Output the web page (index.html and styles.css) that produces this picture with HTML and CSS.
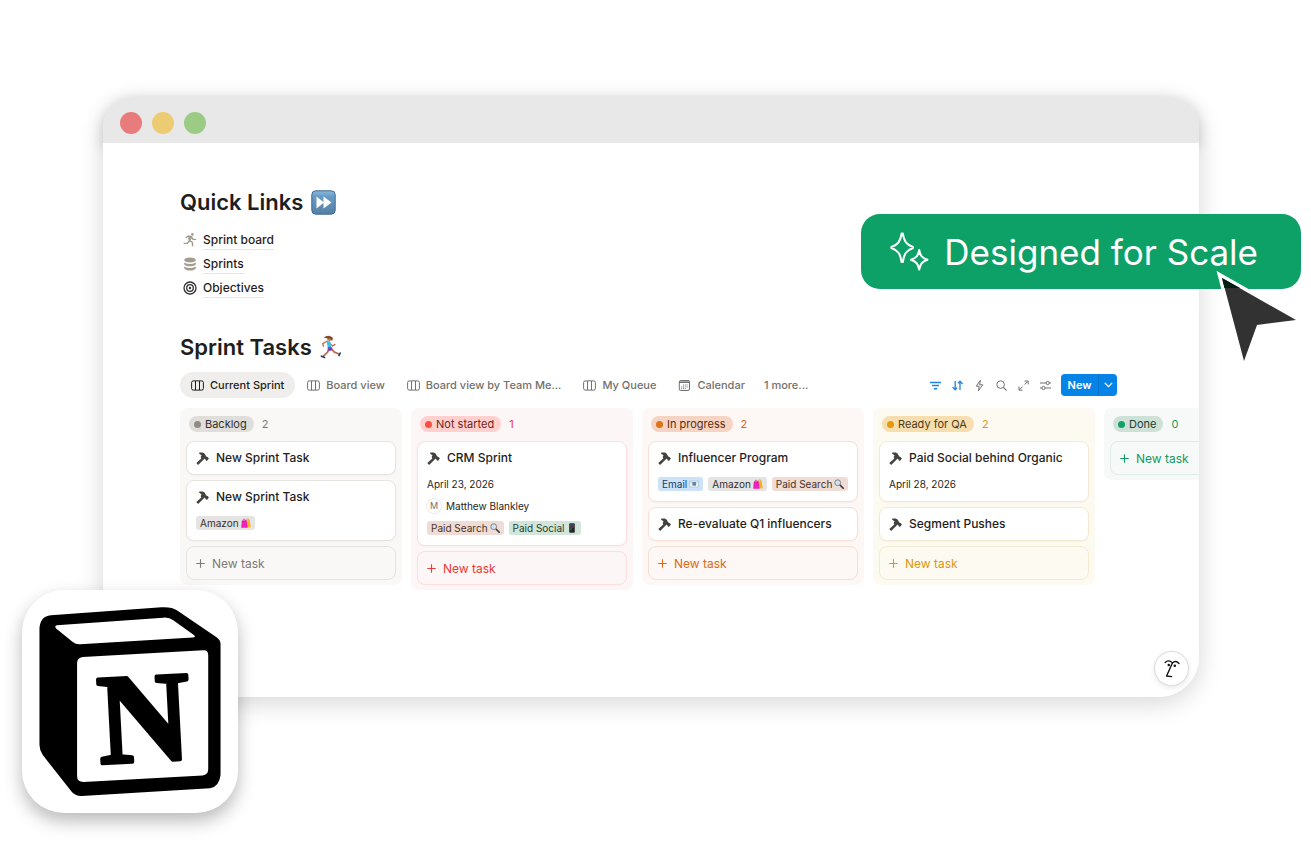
FILE: index.html
```html
<!DOCTYPE html>
<html lang="en">
    <head>
        <meta charset="UTF-8">
        <meta name="viewport" content="width=device-width, initial-scale=1">
        <title>Sprint Board</title>

        <link rel="stylesheet" href="styles.css">
    </head>

    <body>
        <!-- Shared icons -->
        <svg class="sprite" aria-hidden="true">
            <symbol id="hammer" viewBox="0 0 13 13">
                <path fill="#44423e" d="M0.3 11.1L5.3 6.4L4.6 4.9L5.6 3.6L3 1.4L3.4 0.6L6.8 0.6L8.8 1.8L9.8 3.8L10.9 5L11.6 4.9L12.9 6.6L10.9 9.1L9.4 7.9L9.4 7.1L8.3 6.8L7.4 7.8L2.1 12.9Z"/>
            </symbol>
            <symbol id="board" viewBox="0 0 13 11">
                <rect x="0.6" y="0.9" width="11.8" height="9.2" rx="1.6" fill="none" stroke="currentColor" stroke-width="1"/>
                <path d="M4.5 1V10M8.5 1V10" stroke="currentColor" stroke-width="1"/>
            </symbol>
            <symbol id="plus" viewBox="0 0 9 9">
                <path d="M4.5 0.3V8.7M0.3 4.5H8.7" stroke="currentColor" stroke-width="1.1"/>
            </symbol>
            <symbol id="bags" viewBox="0 0 10 10">
                <path d="M4.8 2.6L8.6 2L9.8 9.2L5.5 9.6Z" fill="#f6b51d"/>
                <path d="M5.5 2.8C5.5 0.2 7.8 0 8 2.4" fill="none" stroke="#d98a12" stroke-width="0.7"/>
                <path d="M0.8 2.7L5.6 2.3L6.6 9.7L0.2 9.7Z" fill="#f21fc0"/>
                <path d="M1.8 4C1.8 0.2 4.3 0.2 4.5 3.8" fill="none" stroke="#b9108f" stroke-width="0.7"/>
            </symbol>
            <symbol id="lens" viewBox="0 0 10 10">
                <path d="M6 6L9.2 9.2" stroke="#34343a" stroke-width="1.6" stroke-linecap="round"/>
                <circle cx="3.7" cy="3.7" r="2.9" fill="#cfe3f1" stroke="#77797d" stroke-width="0.9"/>
            </symbol>
            <symbol id="phone" viewBox="0 0 10 10">
                <rect x="2.2" y="0.3" width="5.6" height="9.4" rx="1" fill="#26262b"/>
                <path d="M3.3 2H4.5M5.4 2H6.6" stroke="#4db2f0" stroke-width="1"/>
                <path d="M3.3 4H4.5M5.4 4H6.6" stroke="#e0574f" stroke-width="1"/>
                <path d="M3.3 6H4.5" stroke="#58b96a" stroke-width="1"/>
            </symbol>
            <symbol id="mail" viewBox="0 0 10 10">
                <rect x="0.8" y="2" width="8.4" height="6" fill="#eef1f4" stroke="#a9b4be" stroke-width="0.5"/>
                <rect x="3.4" y="3" width="3.6" height="3.6" fill="#5c86ad"/>
                <path d="M1 2.4L4 5M9 2.4L6.4 5" stroke="#9aa7b3" stroke-width="0.5"/>
            </symbol>
        </svg>

        <div class="stage">
            <main class="window">
                <div class="title-bar">
                    <span class="dot dot-red"></span>
                    <span class="dot dot-yellow"></span>
                    <span class="dot dot-green"></span>
                </div>

                <div class="page">
                    <h2>
                        Quick Links
                        <svg class="heading-icon" viewBox="0 0 25 25" aria-hidden="true">
                            <defs>
                                <linearGradient id="tile" x1="0" y1="0" x2="0" y2="1">
                                    <stop offset="0" stop-color="#8ab8dc"/>
                                    <stop offset="0.25" stop-color="#679bc5"/>
                                    <stop offset="1" stop-color="#5580a3"/>
                                </linearGradient>
                            </defs>
                            <rect x="0.8" y="0.8" width="23.4" height="23.4" rx="4" fill="url(#tile)" stroke="#416a8d" stroke-width="1"/>
                            <path d="M5.5 6.5L13 12.5L5.5 18.5ZM12.5 6.5L20.5 12.5L12.5 18.5Z" fill="#fff"/>
                        </svg>
                    </h2>
                    <ul class="links">
                        <li>
                            <svg class="link-icon" viewBox="0 0 14 14" aria-hidden="true">
                                <g fill="none" stroke="#a39c90" stroke-width="1.4" stroke-linecap="round" stroke-linejoin="round">
                                    <path d="M3.2 4.6L5.2 3L8.6 3.6L6.6 7.6L9.4 9.4L9.6 12.8"/>
                                    <path d="M8.6 3.8L9.8 6.2L12.6 6.4"/>
                                    <path d="M6.2 8L4.6 10.2L1.2 10.4"/>
                                </g>
                                <path d="M5.4 3.4L8.4 3.8L7.2 7.8L5.4 7Z" fill="#a39c90"/>
                                <circle cx="9.4" cy="1.4" r="1.3" fill="#a39c90"/>
                            </svg>
                            <a href="#">Sprint board</a>
                        </li>
                        <li>
                            <svg class="link-icon" viewBox="0 0 14 14" aria-hidden="true">
                                <ellipse cx="7" cy="3" rx="5.8" ry="2.6" fill="#a39c90"/>
                                <path d="M1.2 5.4Q7 8.4 12.8 5.4V7.2Q11.6 9.2 7 9.3Q2.4 9.2 1.2 7.2ZM1.2 9.4Q7 12.4 12.8 9.4V11.2Q11.4 13.5 7 13.6Q2.6 13.5 1.2 11.2Z" fill="#a39c90"/>
                            </svg>
                            <a href="#">Sprints</a>
                        </li>
                        <li>
                            <svg class="link-icon" viewBox="0 0 14 14" aria-hidden="true">
                                <g fill="none" stroke="#32302c" stroke-width="1.3">
                                    <circle cx="7" cy="7" r="6"/>
                                    <circle cx="7" cy="7" r="3.3"/>
                                </g>
                                <circle cx="7" cy="7" r="1.2" fill="#32302c"/>
                            </svg>
                            <a href="#">Objectives</a>
                        </li>
                    </ul>

                    <h2>
                        Sprint Tasks
                        <svg class="heading-icon" viewBox="0 0 25 25" aria-hidden="true">
                            <g fill="none" stroke-linecap="round" stroke-linejoin="round">
                                <path d="M7.4 6L2.8 8.6L3.4 11" stroke="#b8714a" stroke-width="1.4"/>
                                <path d="M9 14L7.4 17.4L3.6 20.8" stroke="#b8714a" stroke-width="1.8"/>
                                <path d="M11.4 13.8L14.4 17.2L19 19" stroke="#b8714a" stroke-width="1.8"/>
                                <path d="M10 8.4L12.6 11L15 9.4" stroke="#b8714a" stroke-width="1.3"/>
                                <path d="M1.4 21.2L4.6 22.4" stroke="#27386f" stroke-width="1.6"/>
                                <path d="M19 20.6L20.2 18" stroke="#27386f" stroke-width="1.6"/>
                            </g>
                            <path d="M6.4 5.8L10.4 6.6L11 12L7.8 12.4Z" fill="#35c3e8"/>
                            <path d="M7.6 12.2L11.2 11.8L12.8 14.6L10.2 16L7.8 15.4Z" fill="#7c3fc4"/>
                            <circle cx="9.4" cy="3.8" r="2.2" fill="#c27c50"/>
                            <path d="M3.8 2.6Q8 -0.8 12.6 2.4Q13.2 4 12 6Q10.6 3.4 8.4 3.6Q6 3.4 3.8 2.6Z" fill="#854a2c"/>
                        </svg>
                    </h2>

                    <div class="toolbar">
                        <nav class="tabs">
                            <button class="tab tab-active" type="button"><svg class="tab-icon" aria-hidden="true"><use href="#board"/></svg>Current Sprint</button>
                            <button class="tab" type="button"><svg class="tab-icon" aria-hidden="true"><use href="#board"/></svg>Board view</button>
                            <button class="tab" type="button"><svg class="tab-icon" aria-hidden="true"><use href="#board"/></svg>Board view by Team Me...</button>
                            <button class="tab" type="button"><svg class="tab-icon" aria-hidden="true"><use href="#board"/></svg>My Queue</button>
                            <button class="tab" type="button">
                                <svg class="tab-icon" viewBox="0 0 13 11" aria-hidden="true">
                                    <rect x="1.3" y="0.5" width="10.2" height="10" rx="1.5" fill="none" stroke="currentColor"/>
                                    <path d="M1.3 2.2H11.5" stroke="currentColor" stroke-width="1.6"/>
                                    <path d="M5 5H10M3.2 6.9H10M3.2 8.7H8" stroke="currentColor" stroke-dasharray="1 0.8"/>
                                </svg>Calendar
                            </button>
                            <button class="tab tab-more" type="button">1 more...</button>
                        </nav>

                        <div class="tools">
                            <button class="tool tool-on" type="button" aria-label="Filter">
                                <svg viewBox="0 0 13 13"><path d="M1 3.4H12M3 6.6H10M4.8 9.8H8.2" fill="none" stroke="currentColor" stroke-width="1.5"/></svg>
                            </button>
                            <button class="tool tool-on" type="button" aria-label="Sort">
                                <svg viewBox="0 0 13 13"><path d="M4.2 2V10.6M1.6 8L4.2 10.8L6 8.8M9 11V2.2M7.2 4.2L9 2.2L11.6 5" fill="none" stroke="currentColor" stroke-width="1.3"/></svg>
                            </button>
                            <button class="tool" type="button" aria-label="Automations">
                                <svg viewBox="0 0 13 13"><path d="M7.4 1.4L3.2 7.2H6.2L5.4 11.8L9.8 5.8H6.6Z" fill="none" stroke="currentColor" stroke-width="1" stroke-linejoin="round"/></svg>
                            </button>
                            <button class="tool" type="button" aria-label="Search">
                                <svg viewBox="0 0 13 13"><path d="M8.4 8.4L11.6 11.6" stroke="currentColor" stroke-width="1.2"/><circle cx="5.6" cy="5.6" r="3.8" fill="none" stroke="currentColor" stroke-width="1"/></svg>
                            </button>
                            <button class="tool" type="button" aria-label="Expand">
                                <svg viewBox="0 0 13 13"><path d="M7.6 2H11.2V5.4M11 2.2L7.6 5.6M5.4 11.2H2V7.6M2.2 11L5.6 7.6" fill="none" stroke="currentColor" stroke-width="1"/></svg>
                            </button>
                            <button class="tool" type="button" aria-label="Settings">
                                <svg viewBox="0 0 13 13"><g fill="none" stroke="currentColor" stroke-width="1"><path d="M1 4H7M10.4 4H12M1 9H2.8M6.2 9H12"/><circle cx="8.7" cy="4" r="1.6"/><circle cx="4.5" cy="9" r="1.6"/></g></svg>
                            </button>
                            <div class="new-group">
                                <button class="new-button" type="button">New</button>
                                <button class="new-arrow" type="button" aria-label="New options">
                                    <svg viewBox="0 0 9 6"><path d="M0.8 0.9L4.5 4.6L8.2 0.9" fill="none" stroke="currentColor" stroke-width="1.3"/></svg>
                                </button>
                            </div>
                        </div>
                    </div>

                    <div class="board">
                        <section class="column gray">
                            <header><span class="status">Backlog</span><span class="count">2</span></header>
                            <article class="card">
                                <h3><svg class="hammer" aria-hidden="true"><use href="#hammer"/></svg>New Sprint Task</h3>
                            </article>
                            <article class="card">
                                <h3><svg class="hammer" aria-hidden="true"><use href="#hammer"/></svg>New Sprint Task</h3>
                                <div class="details">
                                    <div class="tags"><span class="tag tag-gray">Amazon <svg aria-hidden="true"><use href="#bags"/></svg></span></div>
                                </div>
                            </article>
                            <button class="new-task" type="button"><svg aria-hidden="true"><use href="#plus"/></svg>New task</button>
                        </section>

                        <section class="column red">
                            <header><span class="status">Not started</span><span class="count">1</span></header>
                            <article class="card">
                                <h3><svg class="hammer" aria-hidden="true"><use href="#hammer"/></svg>CRM Sprint</h3>
                                <div class="details">
                                    <div class="date">April 23, 2026</div>
                                    <div class="person"><span class="avatar">M</span>Matthew Blankley</div>
                                    <div class="tags">
                                        <span class="tag tag-brown">Paid Search <svg aria-hidden="true"><use href="#lens"/></svg></span>
                                        <span class="tag tag-green">Paid Social <svg aria-hidden="true"><use href="#phone"/></svg></span>
                                    </div>
                                </div>
                            </article>
                            <button class="new-task" type="button"><svg aria-hidden="true"><use href="#plus"/></svg>New task</button>
                        </section>

                        <section class="column orange">
                            <header><span class="status">In progress</span><span class="count">2</span></header>
                            <article class="card">
                                <h3><svg class="hammer" aria-hidden="true"><use href="#hammer"/></svg>Influencer Program</h3>
                                <div class="details">
                                    <div class="tags">
                                        <span class="tag tag-blue">Email <svg aria-hidden="true"><use href="#mail"/></svg></span>
                                        <span class="tag tag-gray">Amazon <svg aria-hidden="true"><use href="#bags"/></svg></span>
                                        <span class="tag tag-brown">Paid Search <svg aria-hidden="true"><use href="#lens"/></svg></span>
                                    </div>
                                </div>
                            </article>
                            <article class="card">
                                <h3><svg class="hammer" aria-hidden="true"><use href="#hammer"/></svg>Re-evaluate Q1 influencers</h3>
                            </article>
                            <button class="new-task" type="button"><svg aria-hidden="true"><use href="#plus"/></svg>New task</button>
                        </section>

                        <section class="column yellow">
                            <header><span class="status">Ready for QA</span><span class="count">2</span></header>
                            <article class="card">
                                <h3><svg class="hammer" aria-hidden="true"><use href="#hammer"/></svg>Paid Social behind Organic</h3>
                                <div class="details">
                                    <div class="date">April 28, 2026</div>
                                </div>
                            </article>
                            <article class="card">
                                <h3><svg class="hammer" aria-hidden="true"><use href="#hammer"/></svg>Segment Pushes</h3>
                            </article>
                            <button class="new-task" type="button"><svg aria-hidden="true"><use href="#plus"/></svg>New task</button>
                        </section>

                        <section class="column green">
                            <header><span class="status">Done</span><span class="count">0</span></header>
                            <button class="new-task" type="button"><svg aria-hidden="true"><use href="#plus"/></svg>New task</button>
                        </section>
                    </div>
                </div>

                <button class="helper" type="button" aria-label="Open assistant">
                    <svg viewBox="0 0 18 20">
                        <g fill="none" stroke="#111" stroke-width="1.4" stroke-linecap="round" stroke-linejoin="round">
                            <path d="M2.2 3.4Q5 0.6 8.4 3"/>
                            <path d="M9.4 4Q12.6 1 16 4.4"/>
                            <path d="M9.4 4L3.6 17L8.6 17.6"/>
                        </g>
                        <circle cx="5.8" cy="6" r="1.3" fill="#111"/>
                        <circle cx="11.8" cy="6.8" r="1.3" fill="#111"/>
                    </svg>
                </button>
            </main>

            <!-- Badge and cursor over the window -->
            <div class="badge">
                <svg viewBox="0 0 40 42" aria-hidden="true">
                    <g fill="none" stroke="#fff" stroke-width="2" stroke-linejoin="round">
                        <path d="M12.6 2.4H13.8C15 10.5 17.5 13.5 24 16V17C17.5 19.5 15 22.5 13.8 31H12.6C11.4 22.5 8.9 19.5 2.4 17V16C8.9 13.5 11.4 10.5 12.6 2.4Z"/>
                        <path d="M30.2 19C31.2 24.8 33.2 26.9 38.4 28.8C33.2 30.7 31.2 32.8 30.2 38.6C29.2 32.8 27.2 30.7 22 28.8C27.2 26.9 29.2 24.8 30.2 19Z"/>
                    </g>
                </svg>
                Designed for Scale
            </div>
            <svg class="cursor" viewBox="0 0 90 100" aria-hidden="true">
                <path d="M9 12L83 54L44 59L31 95Z" fill="none" stroke="#fff" stroke-width="7"/>
                <path d="M9 12L83 54L44 59L31 95Z" fill="#323232"/>
                <path d="M9 12L27 22H11.4Z" fill="#001f14"/>
            </svg>

            <div class="logo">
                <svg viewBox="36 44 648 670" aria-hidden="true">
                    <path d="M88 160Q90 123 122 120L455 96Q485 94 503 106L620 186Q632 194 632 206V600Q628 636 600 640L215 663Q198 664 186 652L98 540Q88 525 88 510Z"/>
                    <path fill="#fff" d="M140 150L460 127Q477 125 490 135L553 180Q559 186 548 187L210 207Q198 208 188 200L138 160Q132 152 140 150Z"/>
                    <path fill="#fff" d="M218 245L580 225Q595 224 595 240V582Q595 599 578 601L220 621Q201 621 201 603V264Q201 247 218 245Z"/>
                    <text class="logo-letter" x="402" y="558" text-anchor="middle" transform="rotate(-3 402 430)">N</text>
                </svg>
            </div>
        </div>
    </body>
</html>
```
FILE: styles.css
```css
* {
    box-sizing: border-box;
}

body {
    margin: 0;
    background-color: white;
    color: #1f1e1c;
    font-family: Inter, "Liberation Sans", Arial, sans-serif;
    font-size: 12px;
}

button {
    font-family: inherit;
    padding: 0;
    border: none;
    background: none;
    cursor: pointer;
}

svg {
    display: block;
    flex-shrink: 0;
}

.sprite {
    display: none;
}

.stage {
    position: relative;
    min-height: 100vh;
    padding: 97px 112px 147px 103px;
    overflow: hidden;
}

/* Browser window */
.window {
    position: relative;
    background-color: white;
    border-radius: 30px 30px 40px 40px;
    box-shadow: 0 6px 26px rgba(0, 0, 0, 0.16);
}

.title-bar {
    display: flex;
    align-items: center;
    gap: 10px;
    height: 46px;
    padding: 5px 17px 0;
    background-color: #e8e8e8;
    border-radius: 30px 30px 0 0;
    box-shadow: 0 4px 14px rgba(0, 0, 0, 0.16);
}

.dot {
    width: 22px;
    height: 22px;
    border-radius: 50%;
}

.dot-red {
    background-color: #e87c7c;
}

.dot-yellow {
    background-color: #edcb72;
}

.dot-green {
    background-color: #9ccb86;
}

.page {
    position: relative;
    padding: 43px 0 107px 77px;
    border-radius: 0 0 40px 40px;
    background-color: white;
    overflow: hidden;
}

h2 {
    display: flex;
    align-items: center;
    gap: 8px;
    margin: 0;
    font-size: 22px;
    line-height: 32px;
    font-weight: 600;
}

.heading-icon {
    width: 25px;
    height: 25px;
}

.links {
    margin: 10px 0 31px;
    padding: 0 0 0 3px;
    list-style: none;
}

.links li {
    display: flex;
    align-items: center;
    gap: 6px;
    height: 24px;
}

.link-icon {
    width: 14px;
    height: 14px;
}

.links a {
    color: #1f1e1c;
    font-size: 12px;
    line-height: 18px;
    font-weight: 500;
    text-decoration: none;
    border-bottom: 1px solid #e6e5e3;
}

/* View tabs and tools */
.toolbar {
    display: flex;
    justify-content: space-between;
    align-items: center;
    height: 26px;
    margin: 9px 82px 10px 0;
}

.tabs {
    display: flex;
    gap: 1px;
}

.tab {
    display: flex;
    align-items: center;
    gap: 6px;
    height: 26px;
    padding: 0 10px 0 11px;
    border-radius: 13px;
    color: #73716d;
    font-size: 11px;
    font-weight: 500;
    white-space: nowrap;
}

.tab-active {
    padding-right: 11px;
    background-color: #efeeec;
    color: #1f1e1c;
}

.tab-more {
    padding-left: 8px;
}

.tab-icon {
    width: 13px;
    height: 11px;
}

.tools {
    display: flex;
    align-items: center;
    gap: 9px;
}

.tool {
    color: #73716d;
}

.tool-on {
    color: #2383e2;
}

.tool svg {
    width: 13px;
    height: 13px;
}

.new-group {
    display: flex;
    height: 22px;
    color: white;
    background-color: #0583e6;
    border-radius: 4px;
}

.new-button {
    width: 37px;
    color: white;
    font-size: 11px;
    font-weight: 600;
}

.new-arrow {
    display: flex;
    align-items: center;
    justify-content: center;
    width: 19px;
    color: white;
    border-left: 1px solid #0674cb;
}

.new-arrow svg {
    width: 9px;
    height: 6px;
}

/* Board */
.board {
    display: flex;
    align-items: flex-start;
    gap: 9px;
}

.column {
    --fill: #f9f8f7;
    --line: #e6e4e1;
    --pill: #dfdedb;
    --dot: #8e8b86;
    --ink: #32302c;
    --accent: #7d7a75;
    display: flex;
    flex: 0 0 222px;
    flex-direction: column;
    gap: 5px;
    min-width: 0;
    padding: 8px 6px 5px;
    border-radius: 8px;
    background-color: var(--fill);
}

.red {
    --fill: #fdf6f6;
    --line: #fbdedd;
    --pill: #ffd0ce;
    --dot: #f84f48;
    --ink: #6d1f1b;
    --accent: #ec3a35;
}

.orange {
    --fill: #fdf7f5;
    --line: #f8dfd3;
    --pill: #f6d4c4;
    --dot: #e07217;
    --ink: #5c2d0d;
    --accent: #dc6a12;
}

.yellow {
    --fill: #fdfaf2;
    --line: #f5ead0;
    --pill: #f6deb1;
    --dot: #e39b0c;
    --ink: #4e3b0e;
    --accent: #df980c;
}

.green {
    --fill: #f6f9f7;
    --line: #dfece4;
    --pill: #cee1d6;
    --dot: #0fa268;
    --ink: #1c3f30;
    --accent: #159a62;
}

.column header {
    display: flex;
    align-items: center;
    gap: 8px;
    height: 16px;
    margin: 0 3px 4px;
}

.status {
    display: flex;
    align-items: center;
    gap: 4px;
    height: 16px;
    padding: 0 7px 0 5px;
    border-radius: 8px;
    background-color: var(--pill);
    color: var(--ink);
    font-size: 11px;
}

.status::before {
    content: "";
    width: 7px;
    height: 7px;
    border-radius: 50%;
    background-color: var(--dot);
}

.count {
    color: var(--accent);
    font-size: 11px;
}

.card {
    padding: 8px 9px;
    background-color: white;
    border: 1px solid var(--line);
    border-radius: 8px;
    box-shadow: 0 1px 2px rgba(0, 0, 0, 0.03);
}

.card h3 {
    display: flex;
    align-items: center;
    gap: 7px;
    margin: 0;
    font-size: 12px;
    line-height: 16px;
    font-weight: 500;
    white-space: nowrap;
}

.hammer {
    width: 13px;
    height: 13px;
}

.details {
    display: flex;
    flex-direction: column;
    gap: 8px;
    padding: 11px 0 2px;
    font-size: 10px;
    line-height: 14px;
}

.person {
    display: flex;
    gap: 5px;
}

.avatar {
    width: 14px;
    height: 14px;
    border-radius: 50%;
    box-shadow: 0 0 0 1px #ecebea;
    color: #73716d;
    font-size: 9px;
    text-align: center;
}

.tags {
    display: flex;
    gap: 5px;
}

.tag {
    display: flex;
    align-items: center;
    gap: 2px;
    height: 14px;
    padding: 0 4px;
    border-radius: 3px;
    white-space: nowrap;
}

.tag svg {
    width: 10px;
    height: 10px;
}

.tag-gray {
    background-color: #e5e4e2;
    color: #32302c;
}

.tag-brown {
    background-color: #eedcd5;
    color: #4a3228;
}

.tag-green {
    background-color: #d3e5da;
    color: #1c3f30;
}

.tag-blue {
    background-color: #cbe2fa;
    color: #183c63;
}

.new-task {
    display: flex;
    align-items: center;
    gap: 7px;
    height: 34px;
    padding: 0 9px;
    border: 1px solid var(--line);
    border-radius: 8px;
    color: var(--accent);
    font-size: 12px;
}

.new-task svg {
    width: 9px;
    height: 9px;
}

.helper {
    position: absolute;
    right: 11px;
    bottom: 12px;
    display: flex;
    align-items: center;
    justify-content: center;
    width: 33px;
    height: 33px;
    border-radius: 50%;
    background-color: white;
    box-shadow: 0 0 0 1px #dcdcdc, 0 2px 6px rgba(0, 0, 0, 0.12);
}

.helper svg {
    width: 18px;
    height: 20px;
}

/* Overlays */
.badge {
    position: absolute;
    top: 214px;
    right: 10px;
    display: flex;
    align-items: center;
    gap: 15px;
    height: 75px;
    padding: 0 43px 0 28px;
    border-radius: 19px;
    background-color: #0da168;
    color: white;
    font-size: 35px;
    white-space: nowrap;
}

.badge svg {
    width: 40px;
    height: 42px;
}

.cursor {
    position: absolute;
    top: 266px;
    right: 8px;
    width: 90px;
    height: 100px;
}

.logo {
    position: absolute;
    top: 590px;
    left: 22px;
    border-radius: 42px;
    background-color: white;
    box-shadow: 0 8px 18px rgba(0, 0, 0, 0.28);
}

.logo svg {
    width: 216px;
    height: 223px;
}

.logo-letter {
    stroke: black;
    stroke-width: 12px;
    stroke-linejoin: round;
    font-family: "Liberation Serif", "Times New Roman", serif;
    font-size: 385px;
    font-weight: 700;
}
```
